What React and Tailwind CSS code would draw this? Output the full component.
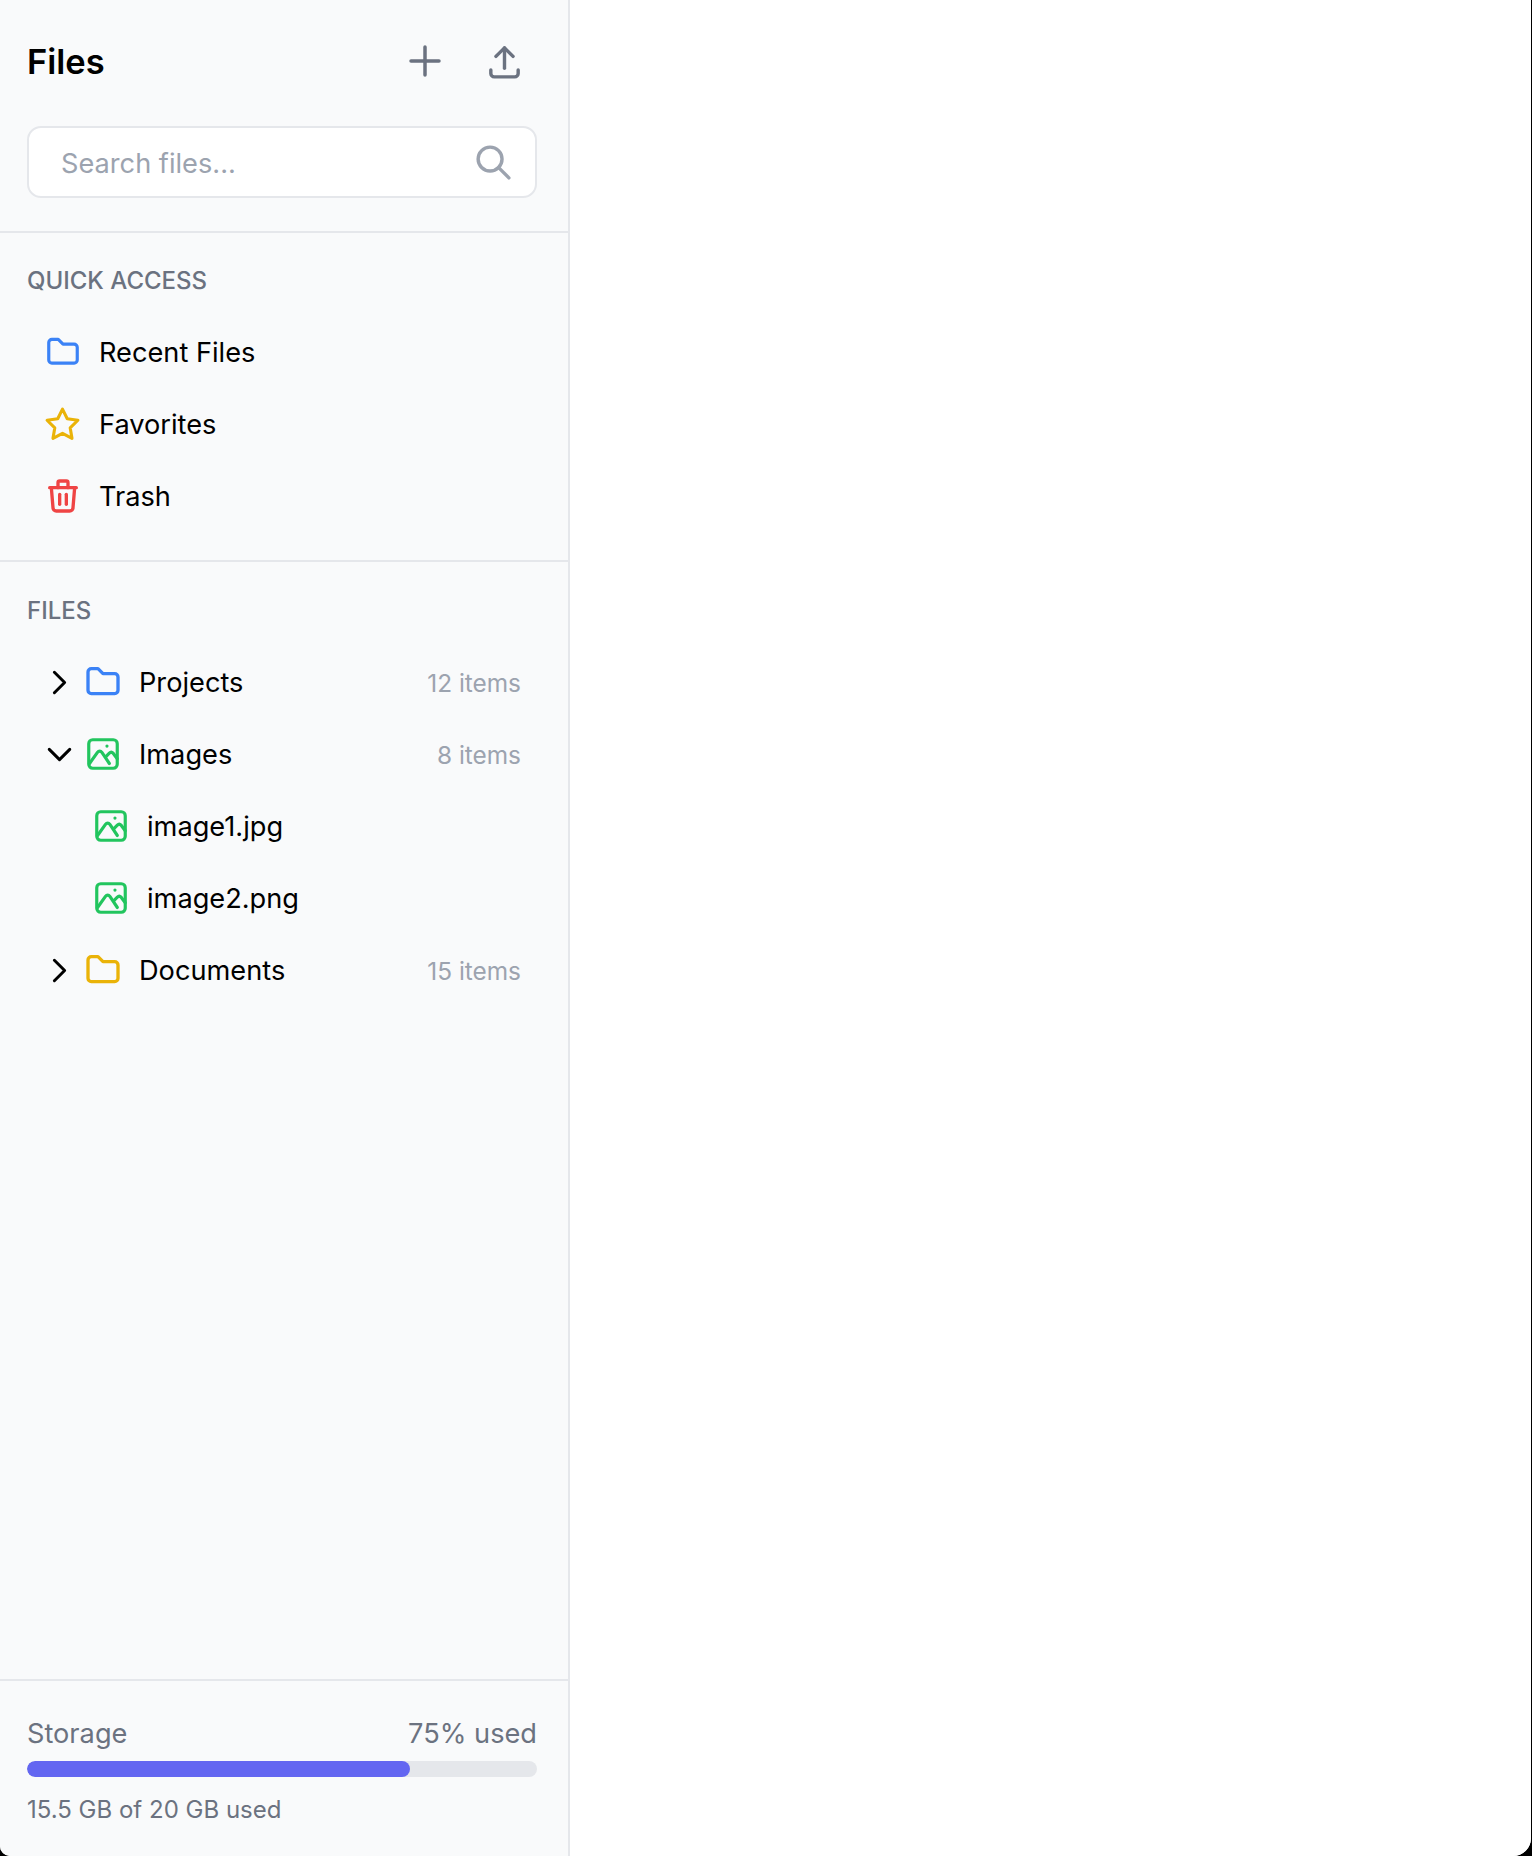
import {
    TbChevronDown,
    TbChevronRight,
    TbFolder,
    TbPlus,
    TbSearch,
    TbStar,
    TbTrash,
    TbUpload
} from "react-icons/tb"


function ImageIcon({ size = 38, className }) {
    return (
        <svg
            width={size}
            height={size}
            viewBox="0 0 24 24"
            fill="none"
            stroke="currentColor"
            strokeWidth="2"
            strokeLinecap="round"
            strokeLinejoin="round"
            className={className}
        >
            <rect x="3" y="3" width="18" height="18" rx="2.5" />
            <path d="M14.5 7h.01" />
            <path d="M3.5 18l5-7c.8-1.1 2-1.1 2.8 0l4.7 7" />
            <path d="M14 13.5l2-2c.7-.7 1.7-.7 2.4 0l2.6 3.5" />
        </svg>
    )
}


const quickAccess = [
    { label: "Recent Files", icon: TbFolder, size: 38, color: "text-[#3b82f6]" },
    { label: "Favorites", icon: TbStar, size: 37, color: "text-[#eab308]" },
    { label: "Trash", icon: TbTrash, size: 40, color: "text-[#ef4444]" }
]


function IconBox({ children }) {
    return (
        <div className="flex w-[41px] shrink-0 items-center justify-center">
            {children}
        </div>
    )
}


function FolderRow({ label, count, icon, open }) {

    const Chevron = open ? TbChevronDown : TbChevronRight

    return (
        <div className="flex h-[72px] items-center gap-[16px] pl-[12px] pr-[16px]">

            <div className="flex items-center gap-[2px]">
                <Chevron size={41} strokeWidth={1.75} className="text-black" />
                <IconBox>{icon}</IconBox>
            </div>

            <span className="flex-1 pt-[2px]">{label}</span>

            <span className="pt-[2px] text-[24.4px] text-[#9ca3af]">{count}</span>

        </div>
    )
}


function FileRow({ label }) {
    return (
        <div className="flex h-[72px] items-center gap-[16px] pl-[63px]">
            <IconBox>
                <ImageIcon className="text-[#22c55e]" />
            </IconBox>
            <span className="pt-[2px]">{label}</span>
        </div>
    )
}


export default function App() {
    return (
        <div className="h-screen bg-black pr-px font-['Inter',sans-serif] text-[27.2px] text-black">

            <div className="flex h-full overflow-hidden rounded-bl-[10px] rounded-br-[18px] bg-white">

                {/* Sidebar */}
                <aside className="flex w-[570px] flex-col border-r-2 border-[#e5e7eb] bg-[#f9fafb]">

                    {/* Header */}
                    <div className="border-b-2 border-[#e5e7eb] pb-[33px] pl-[27px] pr-[31px] pt-[27px]">

                        <div className="mb-[31px] flex h-[68px] items-center justify-between">
                            <h1 className="pt-[2px] text-[34.5px] font-semibold">Files</h1>

                            <div className="flex items-center gap-[35px] pr-[12px] text-[#6b7280]">
                                <TbPlus size={48} strokeWidth={1.75} />
                                <TbUpload size={41} strokeWidth={2} />
                            </div>
                        </div>

                        <div className="flex h-[72px] items-center justify-between rounded-[14px] border-2 border-[#e5e7eb] bg-white pl-[32px] pr-[21px]">
                            <span className="pt-[4px] text-[#9ca3af]">Search files...</span>
                            <TbSearch size={41} strokeWidth={2} className="text-[#9ca3af]" />
                        </div>

                    </div>

                    {/* Quick access */}
                    <div className="border-b-2 border-[#e5e7eb] pb-[28px] pl-[27px] pr-[31px] pt-[33px]">

                        <h2 className="mb-[20px] text-[24px] font-medium leading-[30px] text-[#6b7280]">
                            QUICK ACCESS
                        </h2>

                        {quickAccess.map((item) => (
                            <div key={item.label} className="flex h-[72px] items-center gap-[16px] pl-[15px]">
                                <IconBox>
                                    <item.icon size={item.size} strokeWidth={2} className={item.color} />
                                </IconBox>
                                <span className="pt-[2px]">{item.label}</span>
                            </div>
                        ))}

                    </div>

                    {/* File tree */}
                    <div className="flex-1 pl-[27px] pr-[31px] pt-[34px]">

                        <h2 className="mb-[20px] text-[24px] font-medium leading-[30px] text-[#6b7280]">
                            FILES
                        </h2>

                        <FolderRow
                            label="Projects"
                            count="12 items"
                            icon={<TbFolder size={40} strokeWidth={2} className="text-[#3b82f6]" />}
                        />
                        <FolderRow
                            label="Images"
                            count="8 items"
                            icon={<ImageIcon className="text-[#22c55e]" />}
                            open
                        />
                        <FileRow label="image1.jpg" />
                        <FileRow label="image2.png" />
                        <FolderRow
                            label="Documents"
                            count="15 items"
                            icon={<TbFolder size={40} strokeWidth={2} className="text-[#eab308]" />}
                        />

                    </div>

                    {/* Storage */}
                    <div className="h-[177px] border-t-2 border-[#e5e7eb] pl-[27px] pr-[31px] pt-[33px]">

                        <div className="flex justify-between text-[#6b7280]">
                            <span>Storage</span>
                            <span>75% used</span>
                        </div>

                        <div className="mt-[6px] h-[16px] overflow-hidden rounded-full bg-[#e5e7eb]">
                            <div className="h-full w-3/4 rounded-full bg-[#6366f1]" />
                        </div>

                        <p className="mt-[15px] text-[24px] text-[#6b7280]">15.5 GB of 20 GB used</p>

                    </div>

                </aside>

                <main className="flex-1 bg-white" />

            </div>

        </div>
    )
}
